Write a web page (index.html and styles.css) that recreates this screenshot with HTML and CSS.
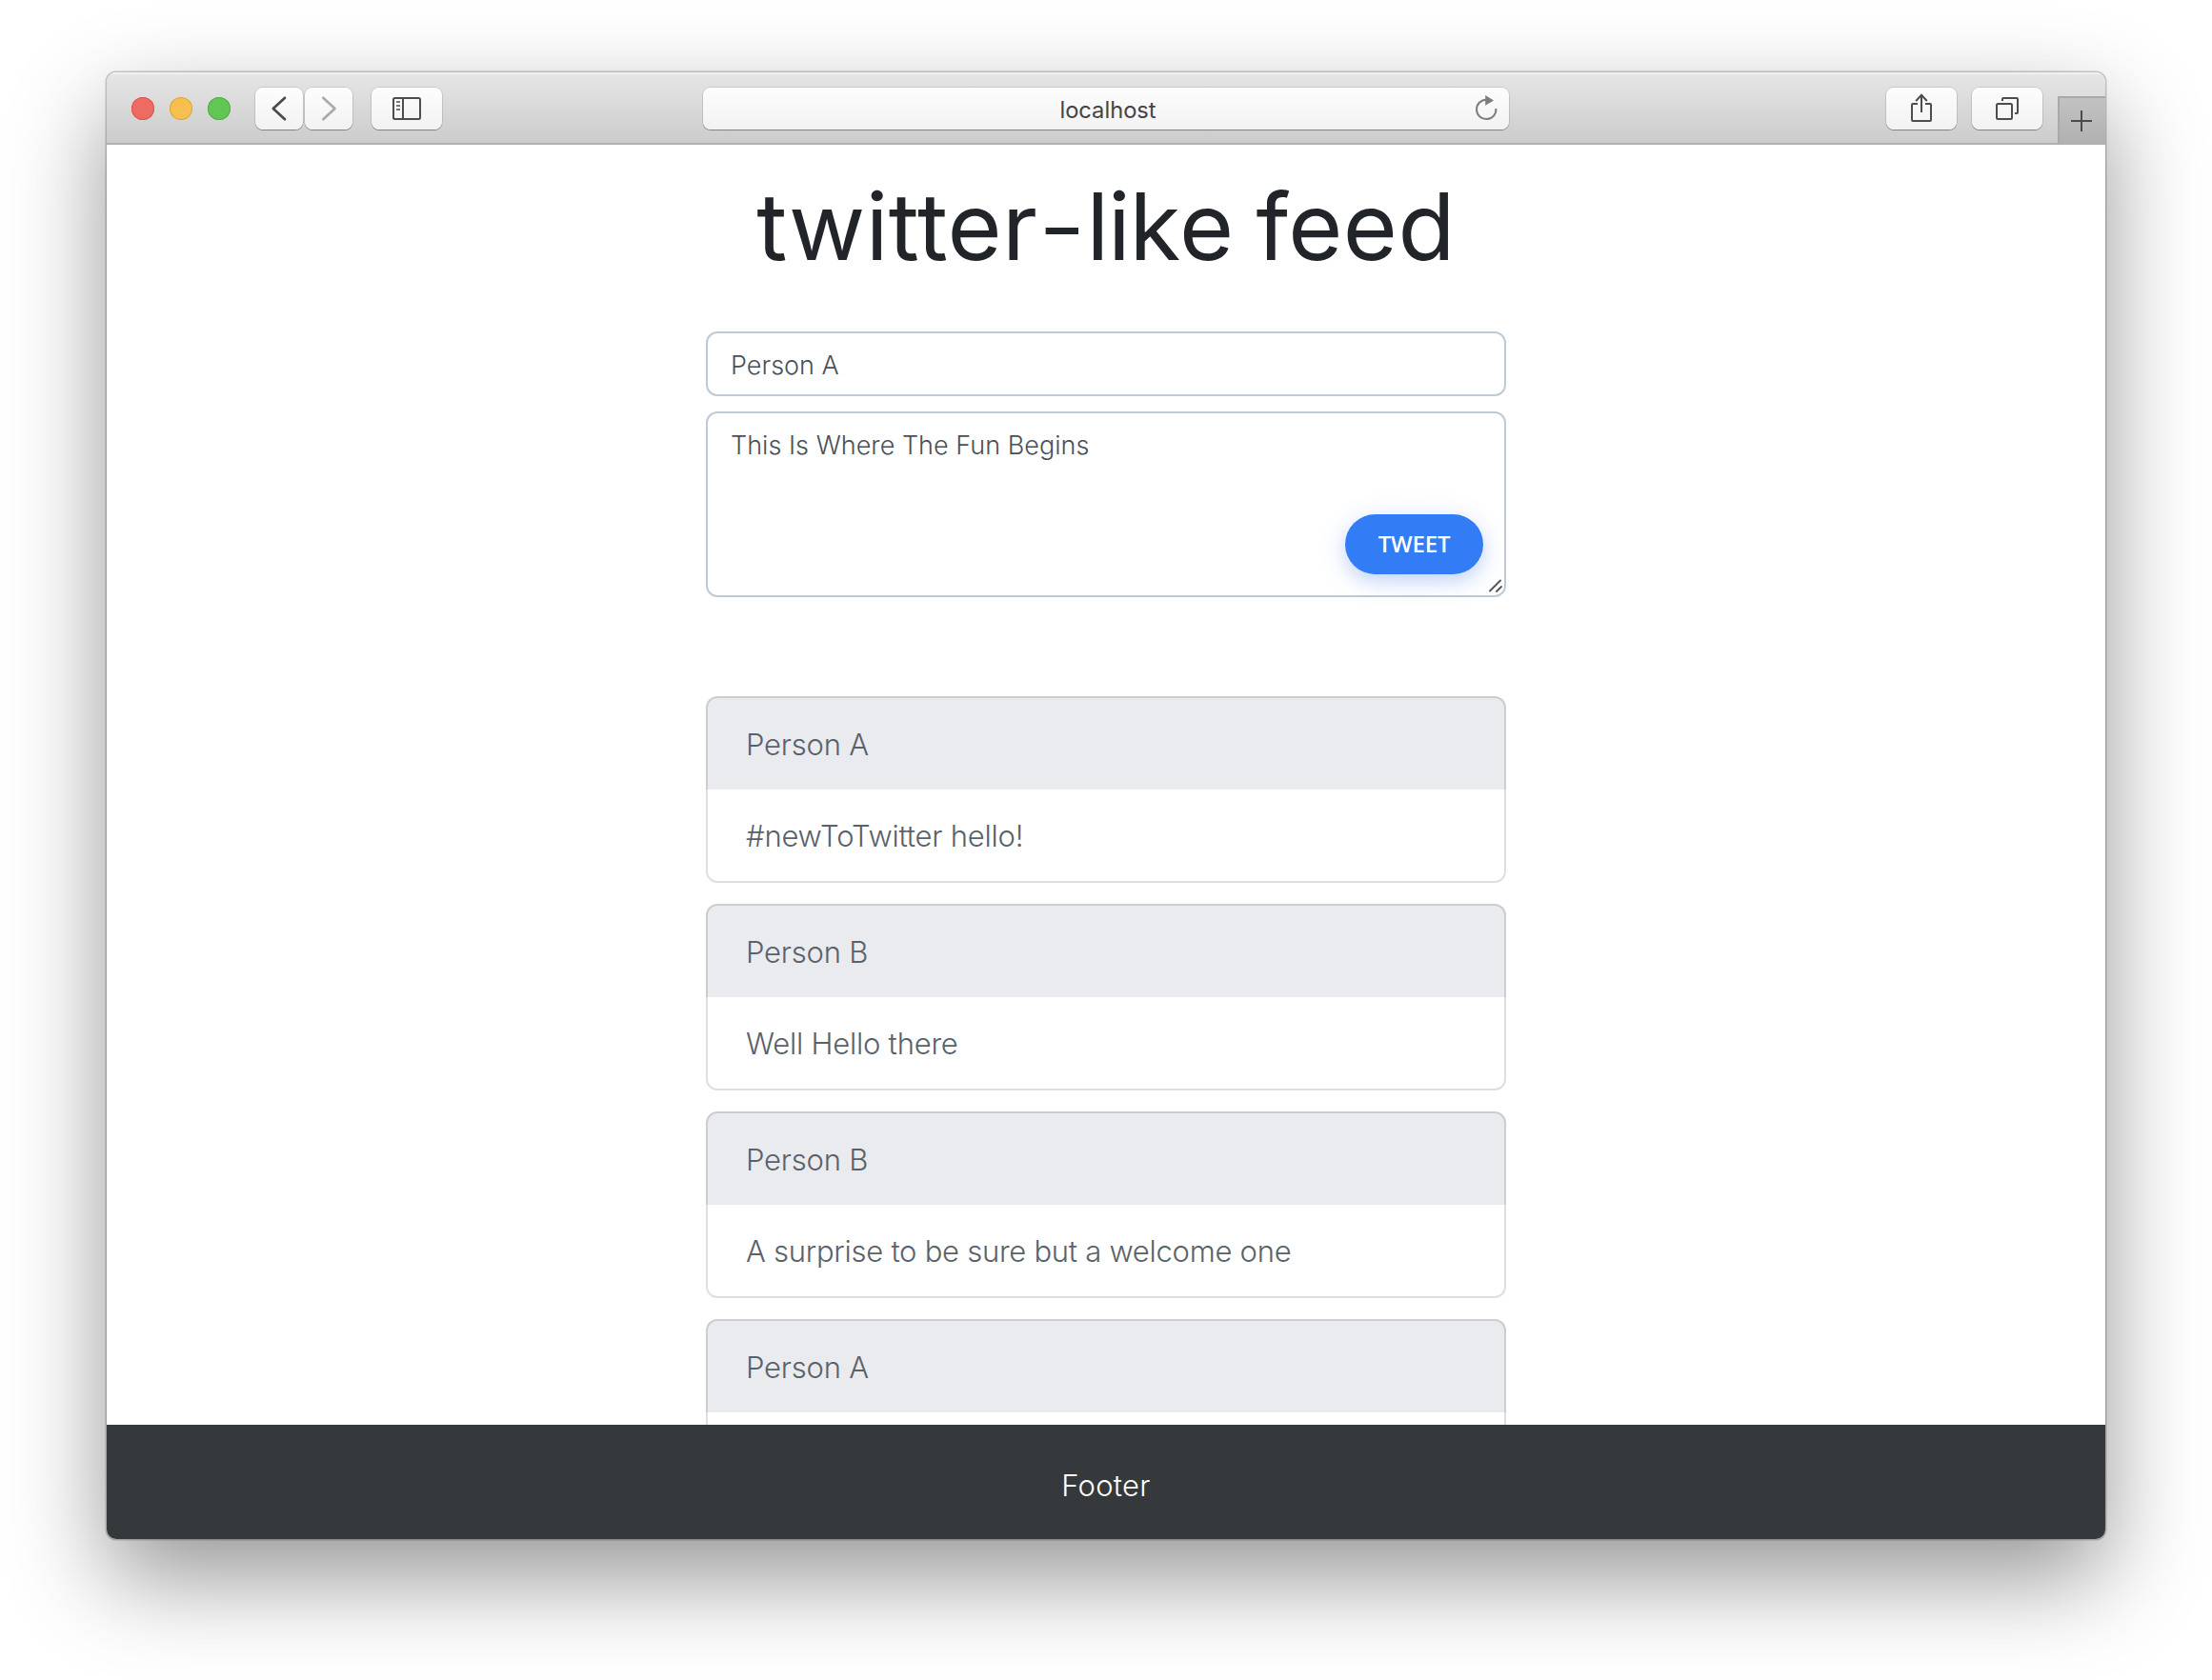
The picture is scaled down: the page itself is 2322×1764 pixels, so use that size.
FILE: index.html
```html
<!DOCTYPE html>
<html lang="en">
<head>
<meta charset="utf-8">
<title>twitter-like feed</title>
<link rel="stylesheet" href="styles.css">
</head>
<body>
<div class="window">
  <header class="toolbar">
    <div class="lights">
      <span class="light light-close"></span>
      <span class="light light-min"></span>
      <span class="light light-max"></span>
    </div>
    <div class="nav">
      <div class="tool tool-nav">
        <svg width="50" height="44" viewBox="0 0 50 44"><path d="M31 10.8 18.8 22 31 33.2" fill="none" stroke="#4a4a4a" stroke-width="2.7" stroke-linecap="round" stroke-linejoin="round"/></svg>
      </div>
      <div class="tool tool-nav">
        <svg width="50" height="44" viewBox="0 0 50 44"><path d="M19.3 10.8 31.5 22 19.3 33.2" fill="none" stroke="#aaa" stroke-width="2.7" stroke-linecap="round" stroke-linejoin="round"/></svg>
      </div>
    </div>
    <div class="tool tool-sidebar">
      <svg width="74" height="44" viewBox="0 0 74 44" fill="none" stroke="#4d4d4d" stroke-width="2"><rect x="23" y="11" width="28" height="22" rx="1.5"/><path d="M33 11v22"/><path d="M26 15h4M26 19h4M26 23h4" stroke="#777" stroke-width="1.8"/></svg>
    </div>
    <div class="address">
      <span class="host">localhost</span>
      <svg class="reload" width="48" height="44" viewBox="0 0 48 44"><path d="M34.4 22a10.2 10.2 0 1 1-10.2-9.3" fill="none" stroke="#7d7d7d" stroke-width="2"/><path d="M23.2 8v10.7l8.8-5.3z" fill="#7d7d7d"/></svg>
    </div>
    <div class="actions">
      <div class="tool tool-wide">
        <svg width="74" height="44" viewBox="0 0 74 44" fill="none" stroke="#4d4d4d" stroke-width="2"><path d="M33 17h-5a1 1 0 0 0-1 1v16a1 1 0 0 0 1 1h18a1 1 0 0 0 1-1V18a1 1 0 0 0-1-1h-5"/><path d="M37 26V8M31.2 14 37 7.8l5.8 6.2"/></svg>
      </div>
      <div class="tool tool-wide">
        <svg width="74" height="44" viewBox="0 0 74 44" fill="none" stroke="#4d4d4d" stroke-width="2"><rect x="26" y="17" width="16" height="16" rx="1.5"/><path d="M32 14v-2a1 1 0 0 1 1-1h14a1 1 0 0 1 1 1v14a1 1 0 0 1-1 1h-2"/></svg>
      </div>
    </div>
    <div class="new-tab">
      <svg width="48" height="47" viewBox="0 0 48 47"><path d="M12 24h22M23 13v22" stroke="#4a4a4a" stroke-width="2"/></svg>
    </div>
  </header>

  <main class="page">
    <h1 class="title">twitter<span class="dash">-</span><span class="tight">lik</span>e feed</h1>
    <form class="composer">
      <input class="field name" type="text" value="Person A">
      <div class="message-box">
        <textarea class="field message">This Is Where The Fun Begins</textarea>
        <button class="tweet" type="button">TWEET</button>
        <svg class="grip" width="16" height="16" viewBox="0 0 16 16"><path d="M2 13.5 13 2.5M9 14l5-5" stroke="#555" stroke-width="1.9" stroke-linecap="round"/></svg>
      </div>
    </form>
    <section class="feed">
      <article class="card"><div class="author">Person A</div><div class="text">#newToTwitter hello!</div></article>
      <article class="card"><div class="author">Person B</div><div class="text">Well Hello there</div></article>
      <article class="card"><div class="author">Person B</div><div class="text text-long">A surprise to be sure but a welcome one</div></article>
      <article class="card"><div class="author">Person A</div><div class="text"></div></article>
    </section>
  </main>

  <footer class="footer">Footer</footer>
</div>
</body>
</html>
```

FILE: styles.css
```css
* {
  box-sizing: border-box;
}

body {
  margin: 0;
  height: 1764px;
  padding: 76px 112px 0;
  overflow: hidden;
  background: #fff;
  font-family: Inter, "Liberation Sans", sans-serif;
}

svg {
  display: block;
}

.window {
  display: flex;
  flex-direction: column;
  width: 2098px;
  height: 1540px;
  border-radius: 10px;
  overflow: hidden;
  background: #fff;
  box-shadow: 0 0 0 1.5px rgba(0, 0, 0, 0.2), 0 40px 100px rgba(0, 0, 0, 0.42);
}

.toolbar {
  flex: none;
  display: flex;
  align-items: center;
  height: 76px;
  padding-left: 26px;
  background: linear-gradient(#e6e6e6, #cbcbcb);
  box-shadow: inset 0 2px 0 rgba(255, 255, 255, 0.45), inset 0 -2px 0 #b0b0b0;
}

.lights {
  display: flex;
  gap: 16px;
  margin-right: 26px;
}

.light {
  width: 24px;
  height: 24px;
  border-radius: 50%;
}

.light-close {
  background: #ed6b60;
  box-shadow: inset 0 0 0 1px #d9574e;
}

.light-min {
  background: #f5c04f;
  box-shadow: inset 0 0 0 1px #dca63c;
}

.light-max {
  background: #62c655;
  box-shadow: inset 0 0 0 1px #50ad43;
}

.nav {
  display: flex;
  gap: 2px;
}

.tool,
.address {
  height: 44px;
  border-radius: 8px;
  background: linear-gradient(#fdfdfd, #f2f2f2);
  box-shadow: 0 0 0 1px rgba(0, 0, 0, 0.11), 0 1px 0.5px rgba(0, 0, 0, 0.3);
}

.tool-nav {
  width: 50px;
}

.tool-sidebar {
  width: 74px;
  margin-left: 20px;
}

.tool-wide {
  width: 74px;
}

.address {
  display: flex;
  align-items: center;
  width: 846px;
  margin-left: 274px;
}

.host {
  flex: 1;
  padding: 3px 0 0 52px;
  color: #444;
  font-size: 23.7px;
  line-height: 44px;
  text-align: center;
}

.actions {
  display: flex;
  gap: 16px;
  margin-left: 396px;
}

.new-tab {
  align-self: flex-end;
  width: 50px;
  height: 49px;
  margin: 0 0 2px auto;
  border: solid #a9a9a9;
  border-width: 2px 0 0 2px;
  background: linear-gradient(#c2c2c2, #b1b1b1);
}

.page {
  flex: 1;
  min-height: 0;
  overflow: hidden;
  display: flex;
  flex-direction: column;
  align-items: center;
  padding-top: 26px;
  background: #fff;
}

.title {
  flex: none;
  margin: 0 0 50px;
  color: #212529;
  font-size: 98px;
  font-weight: 400;
  line-height: 120px;
  letter-spacing: 0.4px;
  word-spacing: -5px;
  white-space: nowrap;
}

.dash {
  font-size: 113px;
  font-weight: 300;
  line-height: 0;
  vertical-align: -5px;
  letter-spacing: 0;
}

.tight {
  letter-spacing: -1.2px;
}

.composer {
  flex: none;
  display: flex;
  flex-direction: column;
  gap: 16px;
  width: 840px;
  margin-bottom: 104px;
}

.field {
  display: block;
  width: 100%;
  border: 2px solid #becad6;
  border-radius: 12px;
  outline: none;
  background: #fff;
  color: #495057;
  font-family: inherit;
  font-size: 27px;
  font-weight: 300;
}

.name {
  height: 68px;
  padding: 2px 24px 0;
}

.message-box {
  position: relative;
  height: 195px;
}

.message {
  height: 195px;
  padding: 14px 24px;
  line-height: 40px;
  letter-spacing: 0.02px;
  resize: none;
  overflow: hidden;
}

.tweet {
  position: absolute;
  right: 24px;
  bottom: 24px;
  width: 145px;
  height: 63px;
  padding: 0 0 2px;
  border: 0;
  border-radius: 32px;
  background: #327df6;
  box-shadow: 0 6px 28px rgba(50, 110, 230, 0.22), 0 8px 14px rgba(50, 110, 230, 0.1);
  color: #fff;
  font-family: "Open Sans", sans-serif;
  font-size: 24px;
  font-weight: 550;
  letter-spacing: -0.2px;
}

.grip {
  position: absolute;
  right: 3px;
  bottom: 4px;
}

.feed {
  flex: none;
  display: flex;
  flex-direction: column;
  gap: 22px;
  width: 840px;
}

.card {
  height: 196px;
  border: 2px solid rgba(0, 0, 0, 0.125);
  border-radius: 12px;
  background: linear-gradient(#eaebef 98px, #fff 98px) border-box;
  color: #5a6169;
  font-size: 31px;
  font-weight: 300;
  line-height: 98px;
  letter-spacing: -0.22px;
}

.author,
.text {
  height: 96px;
  padding: 0 40px;
}

.text-long {
  letter-spacing: -0.27px;
}

.footer {
  flex: none;
  height: 120px;
  padding-top: 4px;
  background: #35393c;
  color: #fff;
  font-size: 31px;
  font-weight: 300;
  line-height: 120px;
  letter-spacing: 0.25px;
  text-align: center;
}
```
